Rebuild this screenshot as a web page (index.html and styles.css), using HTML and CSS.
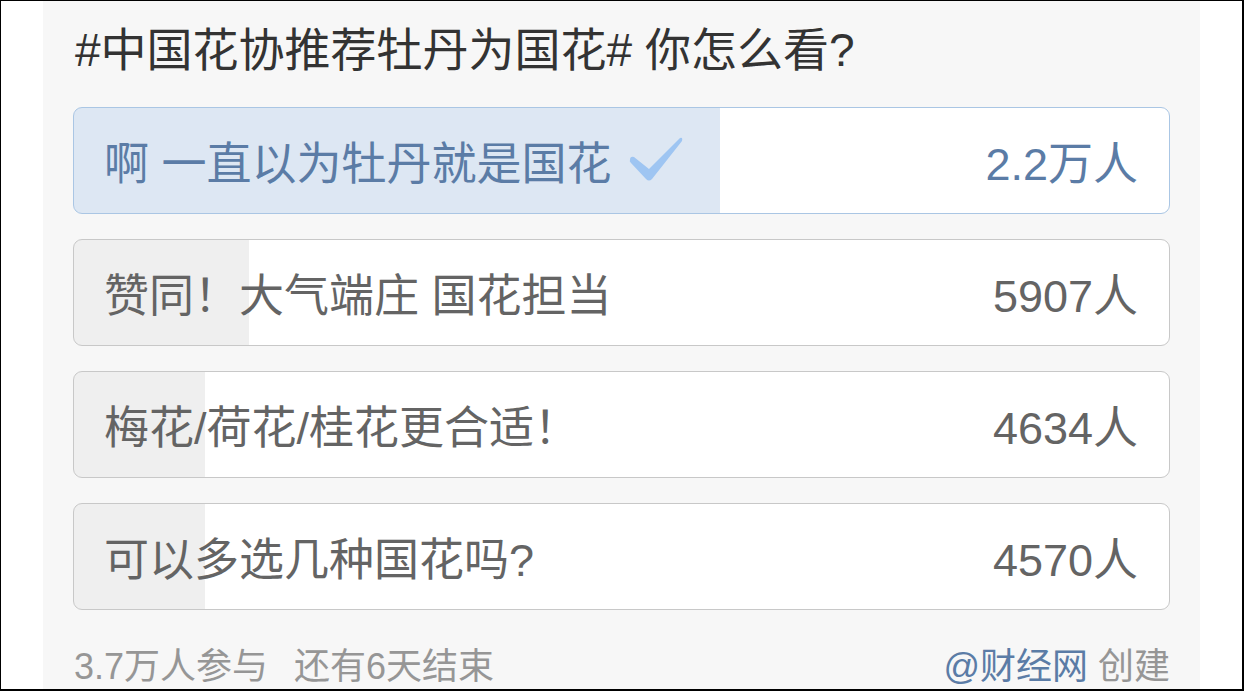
FILE: index.html
```html
<!DOCTYPE html>
<html lang="zh-CN">
<head>
  <meta charset="UTF-8" />
  <title>投票 - 中国花协推荐牡丹为国花</title>
  <meta name="viewport" content="width=device-width, initial-scale=1.0" />
  <link rel="stylesheet" href="styles.css">
</head>
<body>
  <div class="frame">
    <div class="poll">
      <h1 class="poll-title">#中国花协推荐牡丹为国花# 你怎么看?</h1>

      <div class="options">
        <div class="option selected" style="--fill: 646px">
          <span class="option-text">啊 一直以为牡丹就是国花
            <svg class="check" width="54" height="46" viewBox="0 0 54 46">
              <path d="M1 24 Q1 20 5 21 L20 33 L51 2 Q54 1 53 5 L23 43 Q20 46 17 43 L2 27 Q0 25 1 24 Z" fill="#9ec5f2" />
            </svg>
          </span>
          <span class="option-count">2.2万人</span>
        </div>

        <div class="option" style="--fill: 175px">
          <span class="option-text">赞同！大气端庄 国花担当</span>
          <span class="option-count">5907人</span>
        </div>

        <div class="option" style="--fill: 131px">
          <span class="option-text">梅花/荷花/桂花更合适！</span>
          <span class="option-count">4634人</span>
        </div>

        <div class="option" style="--fill: 131px">
          <span class="option-text">可以多选几种国花吗?</span>
          <span class="option-count">4570人</span>
        </div>
      </div>

      <div class="poll-footer">
        <div class="poll-stats">
          <span>3.7万人参与</span>
          <span>还有6天结束</span>
        </div>
        <span><a class="author" href="#">@财经网</a> 创建</span>
      </div>
    </div>
  </div>
</body>
</html>
```

FILE: styles.css
```css
* {
  box-sizing: border-box;
}

body {
  margin: 0;
  font-family: "Liberation Sans", "Noto Sans CJK SC", sans-serif;
  background: #fff;
}

.frame {
  height: 691px;
  border: 1px solid #000;
  border-right-width: 2px;
  border-bottom-width: 2px;
  padding-left: 42px;
  overflow: hidden;
}

.poll {
  width: 1157px;
  height: 100%;
  background: #f7f7f7;
  padding: 21px 30px 0;
}

.poll-title {
  margin: 0 0 29px 2px;
  font-size: 46px;
  line-height: 56px;
  font-weight: normal;
  color: #333;
}

.options {
  display: flex;
  flex-direction: column;
  gap: 25px;
}

.option {
  height: 107px;
  display: flex;
  align-items: center;
  justify-content: space-between;
  padding: 0 31px 0 30px;
  border: 1px solid #c8c8c8;
  border-radius: 9px;
  background: linear-gradient(to right, #efefef var(--fill), #fff var(--fill));
  color: #646464;
  font-size: 45px;
}

.option.selected {
  border-color: #aac6e4;
  background: linear-gradient(to right, #dde7f3 var(--fill), #fff var(--fill));
  color: #5b7ca6;
}

.option-text {
  display: flex;
  align-items: center;
  gap: 17px;
}

.check {
  margin-top: -4px;
}

.option-count {
  font-size: 45px;
}

.poll-footer {
  margin-top: 37px;
  padding-left: 1px;
  display: flex;
  justify-content: space-between;
  font-size: 36px;
  line-height: 40px;
  color: #969696;
}

.poll-stats {
  display: flex;
  gap: 26px;
}

.author {
  color: #5b7ca6;
  text-decoration: none;
}
```
